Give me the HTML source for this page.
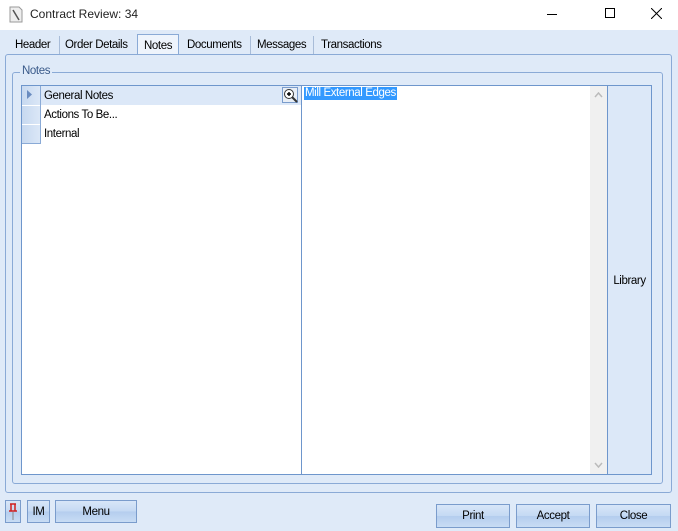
<!DOCTYPE html><html><head><style>
*{box-sizing:border-box;margin:0;padding:0}
body{width:678px;height:531px;background:#dfeaf8;font-family:"Liberation Sans",sans-serif;font-size:11.5px;letter-spacing:-0.4px;color:#000;position:relative;overflow:hidden}
.a{position:absolute}
.btn{position:absolute;border:1px solid #7a9ccc;background:linear-gradient(#d8e6f8,#c4d9f3 50%,#b4cdee 51%,#c8dcf4);text-align:center;line-height:22px}
.t{position:absolute;top:39px}
.s{position:absolute;top:36px;width:1px;height:18px;background:#a8bcd8}
</style></head><body>
<div class="a" style="left:0;top:0;width:678px;height:30px;background:#fff"></div>
<svg class="a" style="left:8px;top:6px" width="16" height="17"><path d="M2 1h9l3 3v12H2z" fill="#eee" stroke="#999"/><path d="M5 4l6 10" stroke="#555" stroke-width="1.5"/></svg>
<div class="a" style="left:30px;top:7px;font-size:12px;color:#222;letter-spacing:0">Contract Review: 34</div>
<div class="a" style="left:547px;top:14px;width:10px;height:1px;background:#000"></div>
<div class="a" style="left:605px;top:8px;width:10px;height:10px;border:1px solid #000"></div>
<svg class="a" style="left:651px;top:8px" width="11" height="11"><path d="M0 0L11 11M11 0L0 11" stroke="#000"/></svg>
<div class="t" style="left:15px">Header</div>
<div class="s" style="left:59px"></div>
<div class="t" style="left:65px">Order Details</div>
<div class="a" style="left:137px;top:34px;width:42px;height:21px;background:#eef4fc;border:1px solid #8aaad6;border-bottom:none;line-height:23px;padding-left:6px">Notes</div>
<div class="t" style="left:187px">Documents</div>
<div class="s" style="left:250px"></div>
<div class="t" style="left:257px">Messages</div>
<div class="s" style="left:313px"></div>
<div class="t" style="left:321px">Transactions</div>
<div class="a" style="left:5px;top:54px;width:667px;height:439px;border:1px solid #8aaad6;border-radius:3px;background:#dfeaf8"></div>
<div class="a" style="left:12px;top:72px;width:651px;height:412px;border:1px solid #8aaad6;border-radius:3px"></div>
<div class="a" style="left:20px;top:65px;background:#dfeaf8;color:#3a5a8a;padding:0 2px">Notes</div>
<div class="a" style="left:21px;top:85px;width:281px;height:390px;border:1px solid #6e96cc;background:#fff"></div>
<div class="a" style="left:22px;top:86px;width:279px;height:19px;background:#dce8f8"></div>
<div class="a" style="left:22px;top:86px;width:18px;height:57px;background:linear-gradient(90deg,#c7d9f0,#dbe7f7)"></div>
<div class="a" style="left:22px;top:105px;width:18px;height:1px;background:#fff"></div>
<div class="a" style="left:22px;top:124px;width:18px;height:1px;background:#fff"></div>
<div class="a" style="left:40px;top:86px;width:1px;height:57px;background:#8aaad6"></div>
<div class="a" style="left:22px;top:143px;width:19px;height:1px;background:#8aaad6"></div>
<svg class="a" style="left:27px;top:90px" width="6" height="9"><path d="M0 0L5 4.5L0 9z" fill="#6a8cc0"/></svg>
<div class="a" style="left:44px;top:90px">General Notes</div>
<div class="a" style="left:44px;top:109px">Actions To Be...</div>
<div class="a" style="left:44px;top:128px">Internal</div>
<svg class="a" style="left:282px;top:87px" width="17" height="17"><rect x=".5" y=".5" width="15" height="15" fill="#e8eef6" stroke="#7a9ccc"/><circle cx="7" cy="7" r="4.5" fill="#fff" stroke="#333"/><path d="M5 7h4M7 5v4" stroke="#000" stroke-width="1.4"/><path d="M10 10l5 5" stroke="#333" stroke-width="2"/></svg>
<div class="a" style="left:301px;top:85px;width:307px;height:390px;border:1px solid #6e96cc;background:#fff"></div>
<div class="a" style="left:590px;top:86px;width:17px;height:388px;background:#f0f0f0"></div>
<svg class="a" style="left:594px;top:92px" width="9" height="6"><path d="M1 5L4.5 1L8 5" stroke="#bbb" fill="none" stroke-width="1.5"/></svg>
<svg class="a" style="left:594px;top:462px" width="9" height="6"><path d="M1 1L4.5 5L8 1" stroke="#bbb" fill="none" stroke-width="1.5"/></svg>
<div class="a" style="left:304px;top:87px;background:#3399ff;color:#fff;padding:0 1px;line-height:13px;height:13px">Mill External Edges</div>
<div class="a" style="left:607px;top:85px;width:45px;height:390px;border:1px solid #6e96cc;background:#dce8f8;line-height:390px;text-align:center">Library</div>
<div class="btn" style="left:5px;top:500px;width:16px;height:23px"></div>
<svg class="a" style="left:9px;top:503px" width="8" height="18"><path d="M1 1h6M2 1v7M6 1v7M0 8h8" stroke="#d02020" stroke-width="1.5"/><path d="M4 9v8" stroke="#888"/></svg>
<div class="btn" style="left:27px;top:500px;width:23px;height:23px">IM</div>
<div class="btn" style="left:55px;top:500px;width:82px;height:23px">Menu</div>
<div class="btn" style="left:436px;top:504px;width:74px;height:24px;line-height:23px">Print</div>
<div class="btn" style="left:516px;top:504px;width:74px;height:24px;line-height:23px">Accept</div>
<div class="btn" style="left:596px;top:504px;width:75px;height:24px;line-height:23px">Close</div>
</body></html>
